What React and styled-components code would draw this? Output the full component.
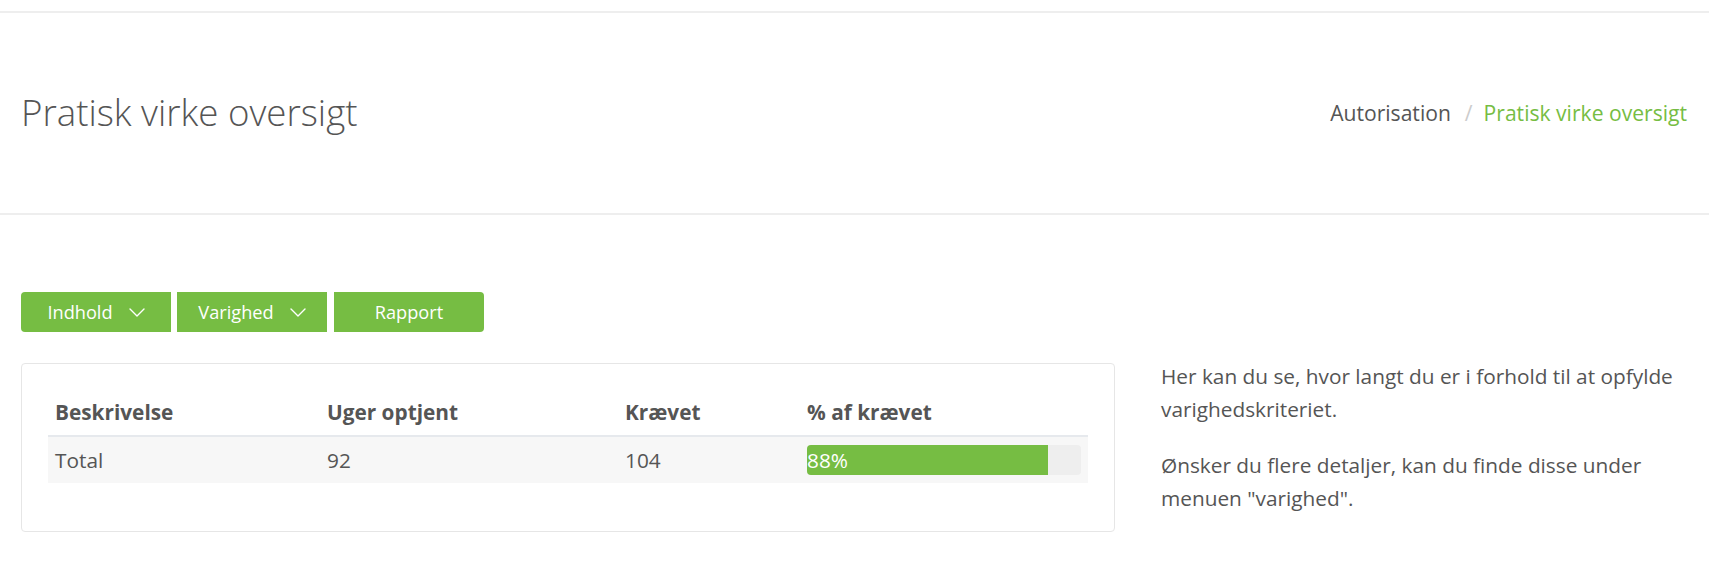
import React from "react";
import styled, { createGlobalStyle } from "styled-components";

const GREEN = "#76bd43";
const TEXT = "#555555";

const GlobalStyle = createGlobalStyle`
  html, body { margin: 0; padding: 0; background: #ffffff; }
  body {
    font-family: "Open Sans", "Noto Sans", "Liberation Sans", sans-serif;
    color: ${TEXT};
    font-size: 20.8px;
  }
  * { box-sizing: border-box; }
`;

const Page = styled.div`
  display: flex;
  flex-direction: column;
  width: 100%;
`;

const TopBar = styled.div`
  height: 13px;
  border-bottom: 2px solid #eeeeee;
`;

const PageHeader = styled.header`
  height: 202px;
  border-bottom: 2px solid #eeeeee;
  display: flex;
  align-items: center;
  justify-content: space-between;
  padding: 0 22px 0 21px;
`;

const Title = styled.h1`
  margin: 0 0 2px 0;
  font-weight: 300;
  font-size: 36.7px;
  line-height: 1.2;
  color: ${TEXT};
`;

const Breadcrumb = styled.ol`
  list-style: none;
  margin: 0;
  padding: 0;
  display: flex;
  align-items: center;
  font-size: 21.1px;
  line-height: 30px;
`;

const Crumb = styled.li`
  color: ${(p) => (p.$active ? GREEN : TEXT)};
`;

const Separator = styled.li`
  color: #cccccc;
  padding: 0 11px 0 14px;
`;

const Content = styled.main`
  padding: 77px 21px 0 21px;
  display: flex;
  flex-direction: column;
  gap: 31px;
`;

const ButtonGroup = styled.div`
  display: flex;
  gap: 6px;
`;

const radiusFor = (pos) =>
  pos === "first" ? "4px 0 0 4px" : pos === "last" ? "0 4px 4px 0" : "0";

const ActionButton = styled.button`
  width: 150px;
  height: 40px;
  border: none;
  border-radius: ${(p) => radiusFor(p.$pos)};
  background: ${GREEN};
  color: #ffffff;
  font-family: inherit;
  font-size: 18.2px;
  display: flex;
  align-items: center;
  justify-content: center;
  gap: 16px;
  padding: 0;
  margin-left: ${(p) => (p.$pos === "last" ? "1px" : "0")};
  cursor: pointer;
`;

const Row = styled.div`
  display: flex;
  align-items: flex-start;
  gap: 46px;
`;

const Card = styled.section`
  width: 1094px;
  flex: none;
  border: 1px solid #e6e6e6;
  border-radius: 4px;
  padding: 25px 26px 48px 26px;
`;

const Table = styled.table`
  width: 100%;
  border-collapse: collapse;
  table-layout: fixed;
`;

const Th = styled.th`
  text-align: left;
  font-weight: 700;
  font-size: 20.8px;
  line-height: 30px;
  padding: 8px 7px;
  color: ${TEXT};
  border-bottom: 2px solid #e6e9ed;
`;

const Td = styled.td`
  font-size: 20.8px;
  line-height: 30px;
  padding: 8px 7px;
  background: #f7f7f7;
  color: ${TEXT};
`;

const Progress = styled.div`
  height: 30px;
  background: #eeeeee;
  border-radius: 4px;
  overflow: hidden;
  display: flex;
`;

const ProgressFill = styled.div`
  height: 100%;
  background: ${GREEN};
  color: #ffffff;
  font-size: 20.8px;
  line-height: 30px;
  white-space: nowrap;
`;

const Aside = styled.aside`
  flex: 1;
  min-width: 0;
  margin-top: -3px;
`;

const Para = styled.p`
  margin: 0 0 24px 0;
  font-size: 20.8px;
  line-height: 32.7px;
  color: ${TEXT};
`;

const Chevron = () => (
  <svg width="16" height="9" viewBox="0 0 16 9" fill="none" aria-hidden="true">
    <polyline points="1,1 8,8 15,1" stroke="#ffffff" strokeWidth="1.4" strokeLinecap="round" strokeLinejoin="round" />
  </svg>
);

const rows = [{ desc: "Total", earned: 92, required: 104 }];

export default function App() {
  return (
    <Page>
      <GlobalStyle />
      <TopBar />
      <PageHeader>
        <Title>Pratisk virke oversigt</Title>
        <Breadcrumb>
          <Crumb>Autorisation</Crumb>
          <Separator>/</Separator>
          <Crumb $active>Pratisk virke oversigt</Crumb>
        </Breadcrumb>
      </PageHeader>
      <Content>
        <ButtonGroup>
          <ActionButton $pos="first">
            Indhold <Chevron />
          </ActionButton>
          <ActionButton $pos="middle">
            Varighed <Chevron />
          </ActionButton>
          <ActionButton $pos="last">Rapport</ActionButton>
        </ButtonGroup>
        <Row>
          <Card>
            <Table>
              <colgroup>
                <col style={{ width: 272 }} />
                <col style={{ width: 298 }} />
                <col style={{ width: 182 }} />
                <col />
              </colgroup>
              <thead>
                <tr>
                  <Th>Beskrivelse</Th>
                  <Th>Uger optjent</Th>
                  <Th>Krævet</Th>
                  <Th>% af krævet</Th>
                </tr>
              </thead>
              <tbody>
                {rows.map((r) => {
                  const pct = Math.round((r.earned / r.required) * 100);
                  return (
                    <tr key={r.desc}>
                      <Td>{r.desc}</Td>
                      <Td>{r.earned}</Td>
                      <Td>{r.required}</Td>
                      <Td>
                        <Progress>
                          <ProgressFill style={{ width: `${pct}%` }}>{pct}%</ProgressFill>
                        </Progress>
                      </Td>
                    </tr>
                  );
                })}
              </tbody>
            </Table>
          </Card>
          <Aside>
            <Para>Her kan du se, hvor langt du er i forhold til at opfylde varighedskriteriet.</Para>
            <Para>Ønsker du flere detaljer, kan du finde disse under menuen "varighed".</Para>
          </Aside>
        </Row>
      </Content>
    </Page>
  );
}
